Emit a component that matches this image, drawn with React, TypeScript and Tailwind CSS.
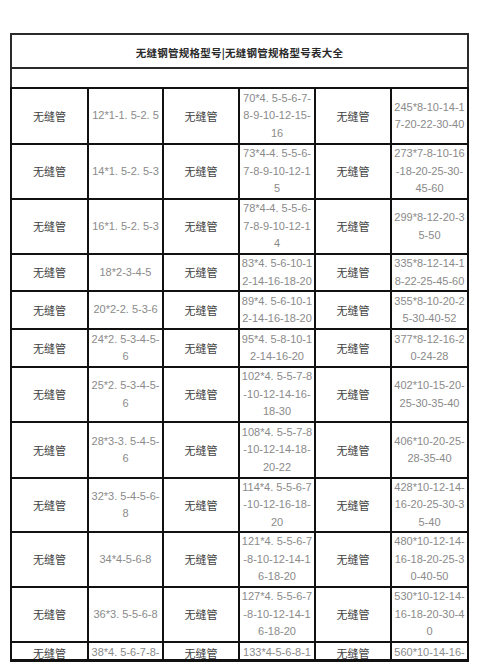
import React from "react"

// each spec cell is a list of the lines as they wrap in the sheet
const rows: string[][][] = [
    [["12*1-1. 5-2. 5"], ["70*4. 5-5-6-7-", "8-9-10-12-15-", "16"], ["245*8-10-14-1", "7-20-22-30-40"]],
    [["14*1. 5-2. 5-3"], ["73*4-4. 5-5-6-", "7-8-9-10-12-1", "5"], ["273*7-8-10-16", "-18-20-25-30-", "45-60"]],
    [["16*1. 5-2. 5-3"], ["78*4-4. 5-5-6-", "7-8-9-10-12-1", "4"], ["299*8-12-20-3", "5-50"]],
    [["18*2-3-4-5"], ["83*4. 5-6-10-1", "2-14-16-18-20"], ["335*8-12-14-1", "8-22-25-45-60"]],
    [["20*2-2. 5-3-6"], ["89*4. 5-6-10-1", "2-14-16-18-20"], ["355*8-10-20-2", "5-30-40-52"]],
    [["24*2. 5-3-4-5-", "6"], ["95*4. 5-8-10-1", "2-14-16-20"], ["377*8-12-16-2", "0-24-28"]],
    [["25*2. 5-3-4-5-", "6"], ["102*4. 5-5-7-8", "-10-12-14-16-", "18-30"], ["402*10-15-20-", "25-30-35-40"]],
    [["28*3-3. 5-4-5-", "6"], ["108*4. 5-5-7-8", "-10-12-14-18-", "20-22"], ["406*10-20-25-", "28-35-40"]],
    [["32*3. 5-4-5-6-", "8"], ["114*4. 5-5-6-7", "-10-12-16-18-", "20"], ["428*10-12-14-", "16-20-25-30-3", "5-40"]],
    [["34*4-5-6-8"], ["121*4. 5-5-6-7", "-8-10-12-14-1", "6-18-20"], ["480*10-12-14-", "16-18-20-25-3", "0-40-50"]],
    [["36*3. 5-5-6-8"], ["127*4. 5-5-6-7", "-8-10-12-14-1", "6-18-20"], ["530*10-12-14-", "16-18-20-30-4", "0"]],
    [["38*4. 5-6-7-8-"], ["133*4-5-6-8-1"], ["560*10-14-16-"]],
]

const Name = ({ last }: { last: boolean }) => (
    <div className={`bg-white flex justify-center overflow-hidden text-[11px] leading-[17px] text-[#404040] font-['Noto_Sans_CJK_SC',sans-serif] ${last ? "items-start pt-[2px]" : "items-center"}`}>
        无缝管
    </div>
)

const Spec = ({ lines, last }: { lines: string[], last: boolean }) => (
    <div className={`bg-white flex flex-col justify-center overflow-hidden text-center text-[11px] leading-[17.5px] text-[#8a8a8a] font-['Liberation_Sans','Noto_Sans_CJK_SC',sans-serif] whitespace-nowrap ${last ? "justify-start pt-[1px]" : "items-center"}`}>
        {lines.map((l, i) => <span key={i}>{l}</span>)}
    </div>
)

export default function App() {
    return (
        <div className="w-[480px] h-[665px] bg-white overflow-hidden pt-[33px] pl-[10px]">
            <div className="w-[459px] border-2 border-b-0 border-[#2a2a2a]">
                <div className="h-[34px] flex items-center justify-center pt-[3px] border-b-2 border-[#2a2a2a] text-[10.5px] tracking-[0.25px] font-bold text-[#2a2a2a] font-['Noto_Sans_CJK_SC',sans-serif]">
                    无缝钢管规格型号|无缝钢管规格型号表大全
                </div>
                <div className="h-[18px]"></div>
            </div>
            <div className="w-[459px] grid grid-cols-[75px_73px_74px_74px_74px_75px] grid-rows-[54px_53px_53px_35px_36px_36px_53px_54px_52px_53px_53px_16px] gap-[2px] p-[2px] pb-[3px] bg-[#111]">
                {rows.map((r, i) => {
                    const last = i === rows.length - 1
                    return (
                        <React.Fragment key={i}>
                            <Name last={last} />
                            <Spec lines={r[0]} last={last} />
                            <Name last={last} />
                            <Spec lines={r[1]} last={last} />
                            <Name last={last} />
                            <Spec lines={r[2]} last={last} />
                        </React.Fragment>
                    )
                })}
            </div>
        </div>
    )
}
